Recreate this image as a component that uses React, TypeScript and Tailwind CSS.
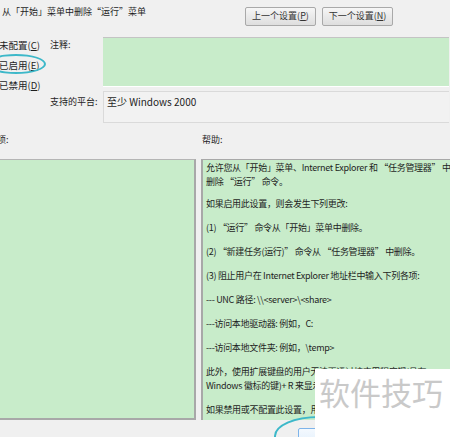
import React from 'react';

const font = { fontFamily: '"Noto Sans CJK SC", "Noto Sans", sans-serif' };

const HelpLine: React.FC<{ children: React.ReactNode }> = ({ children }) => (
  <p className="leading-[14px] whitespace-nowrap">{children}</p>
);

export default function App() {
  return (
    <div
      className="relative w-[450px] h-[437px] overflow-hidden bg-[#f0f0f0] text-[9px] text-[#1e1e1e]"
      style={font}
    >
      {/* top bar */}
      <div className="flex items-center h-[34px] pl-[2px]">
        <span className="whitespace-nowrap -mt-[10px]">从「开始」菜单中删除“运行”菜单</span>
        <div className="ml-auto mr-[57px] flex gap-[6px] -mt-[2px]">
          <button className="h-[19px] w-[71px] rounded-[2px] border border-[#a9a9a9] bg-gradient-to-b from-[#f6f6f6] to-[#dedede] text-[9px] text-[#333]">
            上一个设置(<span className="underline">P</span>)
          </button>
          <button className="h-[19px] w-[71px] rounded-[2px] border border-[#a9a9a9] bg-gradient-to-b from-[#f6f6f6] to-[#dedede] text-[9px] text-[#333]">
            下一个设置(<span className="underline">N</span>)
          </button>
        </div>
      </div>

      {/* settings row */}
      <div className="flex mt-[3px]">
        <div className="w-[51px] flex flex-col gap-[8px] pt-[2px] -ml-[1px] text-[9.5px]">
          <span className="leading-[12px] whitespace-nowrap">未配置(<span className="underline">C</span>)</span>
          <span className="leading-[12px] whitespace-nowrap">已启用(<span className="underline">E</span>)</span>
          <span className="leading-[12px] whitespace-nowrap">已禁用(<span className="underline">D</span>)</span>
        </div>
        <div className="flex flex-col">
          <div className="flex">
            <span className="w-[53px] pt-[1px] whitespace-nowrap">注释:</span>
            <div className="w-[346px] h-[50px] bg-[#c8ecca] border-t border-[#c4c4c4] border-b border-b-[#ffffff]" />
          </div>
          <div className="flex mt-[4px]">
            <span className="w-[53px] pt-[4px] whitespace-nowrap">支持的平台:</span>
            <div className="w-[346px] h-[32px] bg-[#f2f2f2] border border-[#dadada] border-r-0 pl-[3px] pt-[2px] text-[10px] whitespace-nowrap">
              至少 Windows 2000
            </div>
          </div>
        </div>
      </div>

      {/* labels */}
      <div className="flex mt-[10px] h-[26px]">
        <span className="-ml-[3px] w-[205px]">项:</span>
        <span>帮助:</span>
      </div>

      {/* panes */}
      <div className="flex h-[261px]">
        <div className="w-[196px] bg-[#c8ecca] border-t border-[#b5b5b5] border-r-2 border-r-[#a8a8a8] border-b-2 border-b-[#a8a8a8]" />
        <div className="ml-[5px] flex-1 bg-[#c8ecca] border-t border-l-2 border-[#a8a8a8] pl-[3px] pt-[1px] flex flex-col gap-[10px] text-[9px] tracking-[-0.3px] overflow-hidden">
          <div>
            <HelpLine>允许您从「开始」菜单、Internet Explorer 和 “任务管理器” 中</HelpLine>
            <HelpLine>删除 “运行” 命令。</HelpLine>
          </div>
          <div className="-mt-[2px]">
            <HelpLine>如果启用此设置，则会发生下列更改:</HelpLine>
          </div>
          <HelpLine>(1) “运行” 命令从「开始」菜单中删除。</HelpLine>
          <HelpLine>(2) “新建任务(运行)” 命令从 “任务管理器” 中删除。</HelpLine>
          <HelpLine>(3) 阻止用户在 Internet Explorer 地址栏中输入下列各项:</HelpLine>
          <HelpLine>--- UNC 路径: \\&lt;server&gt;\&lt;share&gt;</HelpLine>
          <HelpLine>---访问本地驱动器: 例如，C:</HelpLine>
          <HelpLine>---访问本地文件夹: 例如，\temp&gt;</HelpLine>
          <div>
            <HelpLine>此外，使用扩展键盘的用户无法再通过按应用程序键(具有</HelpLine>
            <HelpLine>Windows 徽标的键)+ R 来显示 “运行” 对话框。</HelpLine>
          </div>
          <HelpLine>如果禁用或不配置此设置，用户将能够访问 “运行” 命令。</HelpLine>
        </div>
      </div>

      {/* bottom button, partly hidden */}
      <div className="absolute left-[298px] top-[428px] w-[60px] h-[20px] rounded-[2px] border border-[#7eb4ea] bg-gradient-to-b from-[#f4f9fe] to-[#dfeefc]" />

      {/* cyan marks */}
      <div className="absolute left-[-14px] top-[54px] w-[60px] h-[20px] rounded-[50%] border-2 border-[#3db8c9]" />
      <div className="absolute left-[274px] top-[416px] w-[90px] h-[40px] rounded-[50%] border-2 border-[#3db8c9]" />

      {/* watermark */}
      <div className="absolute left-[315px] top-[369px] w-[135px] h-[68px] bg-white pt-[2px] pl-[4px]">
        <span className="block whitespace-nowrap text-[31px] leading-[42px] text-[#c9c9c9]">软件技巧</span>
      </div>
    </div>
  );
}
